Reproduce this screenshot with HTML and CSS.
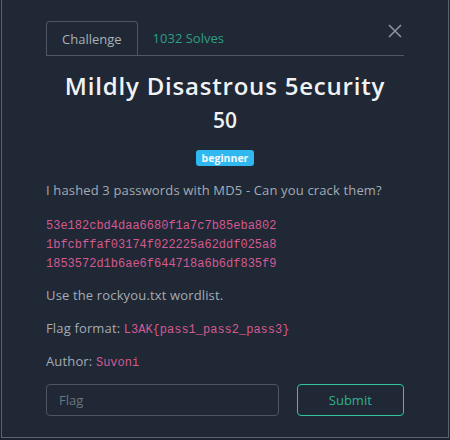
FILE: index.html
```html
<!DOCTYPE html>
<html>
<head>
<meta charset="utf-8">
<link rel="stylesheet" href="styles.css">
</head>
<body>
<div class="modal">
  <div class="content">
    <div class="tabs">
      <div class="tab active">Challenge</div>
      <div class="tab solves">1032 Solves</div>
    </div>
    <button class="close" aria-label="Close">
      <svg width="14" height="14" viewBox="0 0 14 14"><path d="M1 1L13 13M13 1L1 13" stroke="#8b939d" stroke-width="1.6" fill="none"/></svg>
    </button>
    <h1 class="title">Mildly Disastrous 5ecurity</h1>
    <div class="points">50</div>
    <div class="tags"><span class="badge">beginner</span></div>
    <div class="desc">
      <p>I hashed 3 passwords with MD5 - Can you crack them?</p>
      <p class="hashes"><code>53e182cbd4daa6680f1a7c7b85eba802</code><code>1bfcbffaf03174f022225a62ddf025a8</code><code>1853572d1b6ae6f644718a6b6df835f9</code></p>
      <p>Use the rockyou.txt wordlist.</p>
      <p>Flag format: <code>L3AK{pass1_pass2_pass3}</code></p>
      <p>Author: <code>Suvoni</code></p>
    </div>
    <form class="submit-row">
      <input class="flag" type="text" placeholder="Flag">
      <button type="button" class="submit">Submit</button>
    </form>
  </div>
</div>
</body>
</html>
```
FILE: styles.css
```css
html, body {
  margin: 0;
  padding: 0;
  background: #1b2230;
}
body {
  font-family: "Open Sans", "DejaVu Sans", sans-serif;
  width: 450px;
  height: 440px;
  overflow: hidden;
}
.modal {
  margin-left: 1px;
  width: 446px;
  height: 437px;
  border: 1px solid #5b636e;
  border-top: none;
  background: #1f2834;
  box-sizing: content-box;
}
.content {
  position: relative;
  padding: 21px 44px 0 44px;
}
.tabs {
  display: flex;
  border-bottom: 1px solid #4f5762;
  height: 34px;
}
.tab {
  font-size: 13px;
  padding: 0 15px;
  line-height: 34px;
  color: #9aa1aa;
}
.tab.active {
  border: 1px solid #4f5762;
  border-bottom: none;
  border-radius: 4px 4px 0 0;
  color: #a9b0b8;
}
.tab.solves {
  color: #2f9f84;
}
.close {
  position: absolute;
  top: 23px;
  right: 45px;
  background: none;
  border: none;
  padding: 0;
  width: 16px;
  height: 16px;
  display: flex;
  align-items: center;
  justify-content: center;
}
.title {
  margin: 15px 0 0;
  text-align: center;
  font-size: 24px;
  font-weight: 600;
  letter-spacing: 0.8px;
  color: #f0f2f4;
  line-height: 30px;
}
.points {
  text-align: center;
  font-size: 21px;
  font-weight: 600;
  color: #f0f2f4;
  line-height: 26px;
  margin-top: 6px;
}
.tags {
  text-align: center;
  margin-top: 15px;
  line-height: 16px;
}
.badge {
  display: inline-block;
  background: #30b8f0;
  color: #f4f9fc;
  font-size: 10.5px;
  font-weight: 700;
  padding: 0 6px;
  border-radius: 3px;
  line-height: 16px;
}
.desc {
  margin-top: 14px;
  color: #a4abb4;
  font-size: 13px;
  letter-spacing: 0.15px;
}
.desc p {
  margin: 0 0 13px;
  line-height: 20px;
}
.desc p.hashes {
  padding-top: 4px;
  margin-bottom: 11px;
}
code {
  font-family: "Liberation Mono", monospace;
  font-size: 12px;
  line-height: 1;
  letter-spacing: 0;
  color: #d35a92;
}
.hashes code {
  display: block;
  line-height: 19px;
}
.submit-row {
  display: flex;
  gap: 18px;
  margin-top: 6px;
}
.flag {
  width: 234px;
  height: 32px;
  box-sizing: border-box;
  background: transparent;
  border: 1px solid #4d5561;
  border-radius: 4px;
  padding: 0 12px;
  font-family: inherit;
  font-size: 13px;
  color: #a4abb4;
}
.flag::placeholder {
  color: #6d7580;
}
.submit {
  width: 108px;
  height: 32px;
  background: transparent;
  border: 1px solid #2fc79c;
  border-radius: 4px;
  color: #2fb28e;
  font-family: inherit;
  font-size: 13px;
}
```
